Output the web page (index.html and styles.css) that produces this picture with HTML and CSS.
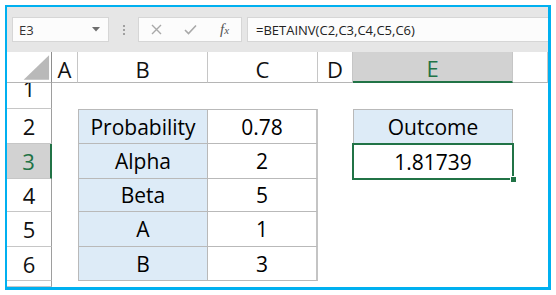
FILE: index.html
```html
<!DOCTYPE html>
<html lang="en">
<head>
    <meta charset="UTF-8">
    <title>BETAINV example</title>
    <link rel="stylesheet" href="styles.css">
</head>
<body>
    <div class="frame">
        <div class="toolbar">
            <div class="namebox">
                <span>E3</span>
                <svg class="arrow" width="8" height="5" viewBox="0 0 8 5"><polygon points="0,0 8,0 4,4.5" fill="#6e6e6e"/></svg>
            </div>
            <div class="dots"><i></i><i></i><i></i></div>
            <div class="fxbuttons">
                <svg width="11" height="11" viewBox="0 0 11 11"><path d="M1 1L10 10M10 1L1 10" stroke="#a9a9a9" stroke-width="1.4" fill="none"/></svg>
                <svg width="13" height="11" viewBox="0 0 13 11"><path d="M1 6L4.5 9.5L12 1.5" stroke="#a9a9a9" stroke-width="1.6" fill="none"/></svg>
                <span class="fx">f<small>x</small></span>
            </div>
            <div class="formula">=BETAINV(C2,C3,C4,C5,C6)</div>
        </div>

        <div class="sheet">
            <div class="corner">
                <svg width="45" height="31" viewBox="0 0 45 31"><polygon points="17,28 43,28 43,3" fill="#b9b9b9"/></svg>
            </div>
            <div class="ch">A</div>
            <div class="ch">B</div>
            <div class="ch">C</div>
            <div class="ch">D</div>
            <div class="ch sel">E</div>
            <div class="ch"></div>

            <div class="rh r1"><span>1</span></div>
            <div></div><div></div><div></div><div></div><div></div><div></div>

            <div class="rh">2</div>
            <div></div>
            <div class="lbl top">Probability</div>
            <div class="val top">0.78</div>
            <div></div>
            <div class="out">Outcome</div>
            <div></div>

            <div class="rh sel">3</div>
            <div></div>
            <div class="lbl">Alpha</div>
            <div class="val">2</div>
            <div></div>
            <div class="res">1.81739<b class="handle"></b></div>
            <div></div>

            <div class="rh">4</div>
            <div></div>
            <div class="lbl">Beta</div>
            <div class="val">5</div>
            <div></div><div></div><div></div>

            <div class="rh">5</div>
            <div></div>
            <div class="lbl">A</div>
            <div class="val">1</div>
            <div></div><div></div><div></div>

            <div class="rh">6</div>
            <div></div>
            <div class="lbl">B</div>
            <div class="val">3</div>
            <div></div><div></div><div></div>

            <div class="rh"></div>
            <div></div><div></div><div></div><div></div><div></div><div></div>
        </div>
    </div>
</body>
</html>
```

FILE: styles.css
```css
body {
    margin: 0;
    background: #fff;
    font-family: "Open Sans", sans-serif;
}
.frame {
    margin: 5px;
    width: 546px;
    height: 285px;
    box-sizing: border-box;
    border-style: solid;
    border-color: #00b0f0;
    border-width: 2px 3px 3px 2px;
    background: #e6e6e6;
    overflow: hidden;
    display: flex;
    flex-direction: column;
}

/* formula bar */
.toolbar {
    height: 45px;
    flex: none;
    display: flex;
    align-items: center;
    padding-left: 5px;
}
.namebox, .fxbuttons, .formula {
    height: 25px;
    box-sizing: border-box;
    background: #fcfcfc;
    border: 1px solid #d6d6d6;
    display: flex;
    align-items: center;
    font-size: 13px;
    color: #222;
}
.namebox {
    width: 97px;
    justify-content: space-between;
    padding: 0 8px 0 6px;
    color: #333;
}
.dots {
    width: 29px;
    display: flex;
    flex-direction: column;
    align-items: center;
    gap: 2px;
}
.dots i {
    width: 2px;
    height: 2px;
    background: #a0a0a0;
}
.fxbuttons {
    width: 104px;
    padding-left: 12px;
    gap: 22px;
}
.fx {
    font-family: "Liberation Serif", serif;
    font-style: italic;
    font-size: 15px;
    color: #555;
    margin-left: 1px;
}
.fx small {
    font-size: 11px;
}
.formula {
    flex: 1;
    margin-left: 5px;
    border-right: none;
    padding-left: 8px;
}

/* grid */
.sheet {
    flex: 1;
    background: #fff;
    display: grid;
    grid-template-columns: 45px 26px 130px 110px 35px 160px 1fr;
    grid-template-rows: 31px 26px 35px 35px 33px 35px 34px 1fr;
}
.sheet > div {
    box-sizing: border-box;
    display: flex;
    align-items: center;
    justify-content: center;
}
.corner {
    border-right: 1px solid #8e8e8e;
    border-bottom: 1px solid #b5b5b5;
}
.ch {
    font-size: 22px;
    color: #111;
    border-right: 1px solid #c6c6c6;
    border-bottom: 1px solid #b5b5b5;
    padding-top: 3px;
}
.ch.sel {
    background: #d2d2d2;
    color: #217346;
    border-bottom: 2px solid #217346;
}
.rh {
    font-size: 22px;
    color: #111;
    border-right: 1px solid #9e9e9e;
    border-bottom: 1px solid #c6c6c6;
}
.rh.sel {
    background: #d2d2d2;
    color: #217346;
    border-right: 2px solid #217346;
}
.sheet > .r1 {
    overflow: hidden;
    align-items: flex-start;
}
.r1 span {
    line-height: 35px;
    margin-top: -12px;
}
.lbl, .val, .out, .res {
    font-size: 21px;
    color: #000;
}
.lbl {
    background: #ddebf7;
    border-left: 1px solid #b9b9b9;
    border-right: 1px solid #b9b9b9;
    border-bottom: 1px solid #b9b9b9;
}
.val {
    border-right: 2px solid #c4c4c4;
    border-bottom: 1px solid #b9b9b9;
}
.top {
    border-top: 1px solid #b9b9b9;
}
.out {
    background: #ddebf7;
    border: 1px solid #b9b9b9;
}
.res {
    position: relative;
    outline: 2px solid #217346;
    outline-offset: -1px;
}
.handle {
    position: absolute;
    right: -4px;
    bottom: -4px;
    width: 5px;
    height: 5px;
    background: #217346;
    border: 1px solid #fff;
}
```
